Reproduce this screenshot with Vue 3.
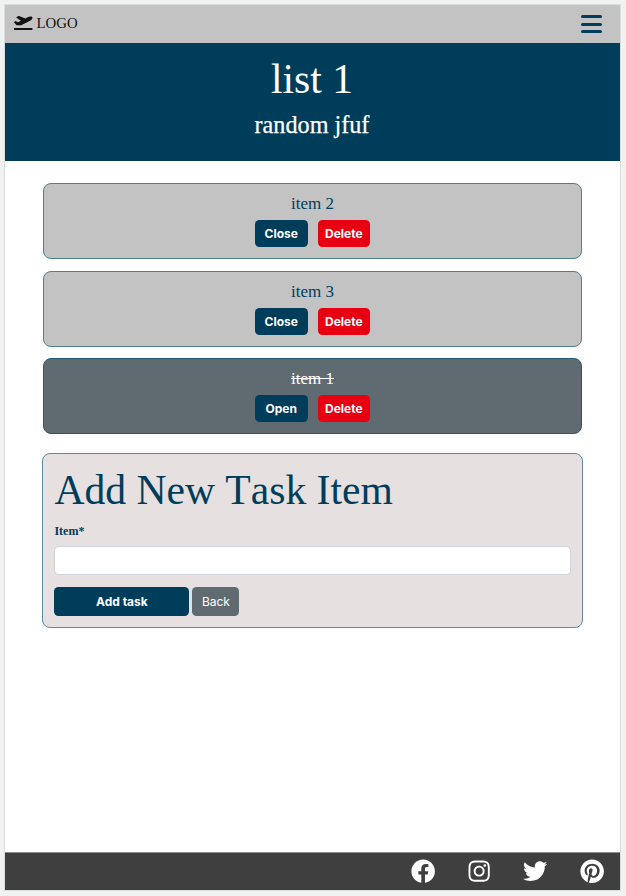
<script setup>
import { ref } from 'vue'

const tasks = ref([
  { id: 2, name: 'item 2', closed: false },
  { id: 3, name: 'item 3', closed: false },
  { id: 1, name: 'item 1', closed: true },
])
const newItem = ref('')

const socials = [
  { name: 'facebook', box: '0 0 512 512', path: 'M504 256C504 119 393 8 256 8S8 119 8 256c0 123.78 90.69 226.38 209.25 245V327.69h-63V256h63v-54.64c0-62.15 37-96.48 93.67-96.48 27.14 0 55.52 4.84 55.52 4.84v61h-31.28c-30.8 0-40.41 19.12-40.41 38.73V256h68.78l-11 71.69h-57.78V501C413.31 482.38 504 379.78 504 256z' },
  { name: 'instagram', box: '-32 0 512 512', path: 'M224.1 141c-63.6 0-114.9 51.3-114.9 114.9s51.3 114.9 114.9 114.9S339 319.5 339 255.9 287.7 141 224.1 141zm0 189.6c-41.1 0-74.7-33.5-74.7-74.7s33.5-74.7 74.7-74.7 74.7 33.5 74.7 74.7-33.6 74.7-74.7 74.7zm146.4-194.3c0 14.9-12 26.8-26.8 26.8-14.9 0-26.8-12-26.8-26.8s12-26.8 26.8-26.8 26.8 12 26.8 26.8zm76.1 27.2c-1.7-35.9-9.9-67.7-36.2-93.9-26.2-26.2-58-34.4-93.9-36.2-37-2.1-147.9-2.1-184.9 0-35.8 1.7-67.6 9.9-93.9 36.1s-34.4 58-36.2 93.9c-2.1 37-2.1 147.9 0 184.9 1.7 35.9 9.9 67.7 36.2 93.9s58 34.4 93.9 36.2c37 2.1 147.9 2.1 184.9 0 35.9-1.7 67.7-9.9 93.9-36.2 26.2-26.2 34.4-58 36.2-93.9 2.1-37 2.1-147.8 0-184.8zM398.8 388c-7.8 19.6-22.9 34.7-42.6 42.6-29.5 11.7-99.5 9-132.1 9s-102.7 2.6-132.1-9c-19.6-7.8-34.7-22.9-42.6-42.6-11.7-29.5-9-99.5-9-132.1s-2.6-102.7 9-132.1c7.8-19.6 22.9-34.7 42.6-42.6 29.5-11.7 99.5-9 132.1-9s102.7-2.6 132.1 9c19.6 7.8 34.7 22.9 42.6 42.6 11.7 29.5 9 99.5 9 132.1s2.7 102.7-9 132.1z' },
  { name: 'twitter', box: '0 0 512 512', path: 'M459.37 151.716c.325 4.548.325 9.097.325 13.645 0 138.72-105.583 298.558-298.558 298.558-59.452 0-114.68-17.219-161.137-47.106 8.447.974 16.568 1.299 25.34 1.299 49.055 0 94.213-16.568 130.274-44.832-46.132-.975-84.792-31.188-98.112-72.772 6.498.974 12.995 1.624 19.818 1.624 9.421 0 18.843-1.3 27.614-3.573-48.081-9.747-84.143-51.98-84.143-102.985v-1.299c13.969 7.797 30.214 12.67 47.431 13.319-28.264-18.843-46.781-51.005-46.781-87.391 0-19.492 5.197-37.36 14.294-52.954 51.655 63.675 129.3 105.258 216.365 109.807-1.624-7.797-2.599-15.918-2.599-24.04 0-57.828 46.782-104.934 104.934-104.934 30.213 0 57.502 12.67 76.67 33.137 23.715-4.548 46.456-13.32 66.599-25.34-7.798 24.366-24.366 44.833-46.132 57.827 21.117-2.273 41.584-8.122 60.426-16.243-14.292 20.791-32.161 39.308-52.628 54.253z' },
  { name: 'pinterest', box: '-8 0 512 512', path: 'M496 256c0 137-111 248-248 248-25.6 0-50.2-3.9-73.4-11.1 10.1-16.5 25.2-43.5 30.8-65 3-11.6 15.4-59 15.4-59 8.1 15.4 31.7 28.5 56.8 28.5 74.8 0 128.7-68.8 128.7-154.3 0-81.9-66.9-143.2-152.9-143.2-107 0-163.9 71.8-163.9 150.1 0 36.4 19.4 81.7 50.3 96.1 4.7 2.2 7.2 1.2 8.3-3.3.8-3.4 5-20.3 6.9-28.1.6-2.5.3-4.7-1.7-7.1-10.1-12.5-18.3-35.3-18.3-56.6 0-54.7 41.4-107.6 112-107.6 60.9 0 103.6 41.5 103.6 100.9 0 67.1-33.9 113.6-78 113.6-24.3 0-42.6-20.1-36.7-44.8 7-29.5 20.5-61.3 20.5-82.6 0-19-10.2-34.9-31.4-34.9-24.9 0-44.9 25.7-44.9 60.2 0 22 7.4 36.8 7.4 36.8s-24.5 103.8-29 123.2c-5 21.4-3 51.6-.9 71.2C65.4 450.9 0 361.1 0 256 0 119 111 8 248 8s248 111 248 248z' },
]

function toggle(task) {
  task.closed = !task.closed
}
function remove(id) {
  tasks.value = tasks.value.filter((t) => t.id !== id)
}
function addTask() {
  if (!newItem.value) return
  tasks.value.push({ id: Date.now(), name: newItem.value, closed: false })
  newItem.value = ''
}
</script>

<template>
  <div class="page">
    <nav class="navbar">
      <div class="brand">
        <svg class="plane" viewBox="0 0 640 512"><path d="M624 448H16c-8.84 0-16 7.16-16 16v32c0 8.84 7.16 16 16 16h608c8.84 0 16-7.16 16-16v-32c0-8.84-7.16-16-16-16zM80.55 341.27c6.28 6.84 15.1 10.72 24.33 10.71l130.54-.18a65.62 65.62 0 0 0 29.64-7.12l290.96-147.65c26.74-13.57 50.71-32.94 67.02-58.31 18.31-28.48 20.3-49.09 13.07-63.65-7.21-14.57-24.74-25.27-58.25-27.45-29.85-1.94-59.54 5.92-86.28 19.48l-98.51 49.99-218.7-82.06a17.799 17.799 0 0 0-18-1.11L90.62 67.29c-10.67 5.41-13.25 19.65-5.17 28.53l156.22 98.1-103.21 52.38-72.35-36.47a17.804 17.804 0 0 0-16.07.02L9.91 230.22c-10.44 5.3-13.19 19.12-5.57 28.08l76.21 82.97z" /></svg>
        <span>LOGO</span>
      </div>
      <button class="menu">
        <span class="bar"></span><span class="bar"></span><span class="bar"></span>
      </button>
    </nav>

    <header class="hero">
      <h1>list 1</h1>
      <p>random jfuf</p>
    </header>

    <main class="content">
      <section class="tasks">
        <article v-for="task in tasks" :key="task.id" class="task" :class="{ closed: task.closed }">
          <p class="name">{{ task.name }}</p>
          <div class="actions">
            <button class="btn" @click="toggle(task)">{{ task.closed ? 'Open' : 'Close' }}</button>
            <button class="btn danger" @click="remove(task.id)">Delete</button>
          </div>
        </article>
      </section>

      <form class="add" @submit.prevent="addTask">
        <h2>Add New Task Item</h2>
        <label for="item">Item*</label>
        <input id="item" v-model="newItem" type="text" />
        <div class="form-actions">
          <button class="btn submit" type="submit">Add task</button>
          <button class="btn back" type="button">Back</button>
        </div>
      </form>
    </main>

    <footer class="footer">
      <svg v-for="s in socials" :key="s.name" class="social" :viewBox="s.box"><path :d="s.path" /></svg>
    </footer>
  </div>
</template>

<style>
body {
  background: #f0f1f1;
}
</style>

<style scoped>
* {
  box-sizing: border-box;
}
.page {
  display: flex;
  flex-direction: column;
  width: 617px;
  height: 887px;
  margin: 4px 0 0 4px;
  border: 1px solid #dcdddd;
  background: #fff;
  color: #003d5b;
  font-family: 'Liberation Serif', serif;
}
h1, h2, p {
  margin: 0;
  font-weight: 400;
}
.navbar {
  display: flex;
  flex: none;
  align-items: center;
  justify-content: space-between;
  height: 38px;
  padding: 0 18px 0 9px;
  background: #c3c3c3;
}
.brand {
  display: flex;
  align-items: center;
  gap: 4px;
  padding-bottom: 3px;
  color: #111;
  font-size: 14.8px;
  line-height: 18px;
}
.plane {
  width: 18.5px;
  height: 15px;
  fill: #111;
}
.menu {
  display: flex;
  flex-direction: column;
  gap: 4.5px;
  width: 21px;
  padding: 0;
  border: 0;
  background: none;
}
.bar {
  height: 3px;
  border-radius: 1.5px;
  background: #003d5b;
}
.hero {
  flex: none;
  height: 118px;
  padding: 11px 1px 0 0;
  background: #003d5b;
  color: #fff;
  text-align: center;
}
.hero h1 {
  font-size: 41.6px;
  line-height: 50px;
}
.hero p {
  margin-top: 6px;
  font-size: 24.2px;
  line-height: 30px;
  -webkit-text-stroke: 0.25px #fff;
}
.content {
  flex: 1;
  padding: 22.3px 38px 0;
}
.tasks {
  display: flex;
  flex-direction: column;
  gap: 11.4px;
}
.task {
  display: flex;
  flex-direction: column;
  align-items: center;
  height: 76px;
  padding-top: 9px;
  border: 1px solid #4f7f96;
  border-radius: 8px;
  background: #c3c3c3;
}
.task.closed {
  background: #5f6b71;
  border-color: #2b5870;
  color: #fff;
}
.name {
  font-size: 17px;
  line-height: 21px;
}
.closed .name {
  text-decoration: line-through;
}
.actions {
  display: flex;
  gap: 10px;
  margin-top: 6px;
}
.btn {
  width: 52.6px;
  height: 27px;
  padding: 0;
  border: 0;
  border-radius: 4.5px;
  background: #003d5b;
  color: #fff;
  font: 700 12px/27px Inter, sans-serif;
}
.danger {
  background: #e60012;
}
.add {
  height: 175px;
  margin-top: 18.8px;
  margin-right: -0.6px;
  margin-left: -0.6px;
  padding: 11px 11px 0;
  border: 1px solid #5f8aa0;
  border-radius: 8px;
  background: #e6e0e0;
}
.add h2 {
  font-size: 41.6px;
  font-kerning: none;
  line-height: 50px;
}
.add label {
  display: block;
  margin-top: 8px;
  font-size: 12px;
  font-weight: 700;
  line-height: 16px;
}
.add input {
  display: block;
  width: 100%;
  height: 29px;
  margin-top: 7px;
  padding: 0 8px;
  border: 1px solid #ced4da;
  border-radius: 4.5px;
  background: #fff;
  font: 12px Inter, sans-serif;
}
.form-actions {
  display: flex;
  gap: 3px;
  margin-top: 12px;
}
.submit {
  width: 135px;
  height: 29px;
}
.back {
  width: 47px;
  height: 29px;
  background: #5f6b71;
  font-weight: 400;
}
.footer {
  display: flex;
  flex: none;
  align-items: center;
  justify-content: flex-end;
  gap: 32px;
  height: 38px;
  padding: 0 16px 0 0;
  border-top: 1px solid #8d8d8d;
  background: #3f3f3f;
}
.social {
  width: 24.3px;
  height: 24.3px;
  fill: #fff;
}
</style>
